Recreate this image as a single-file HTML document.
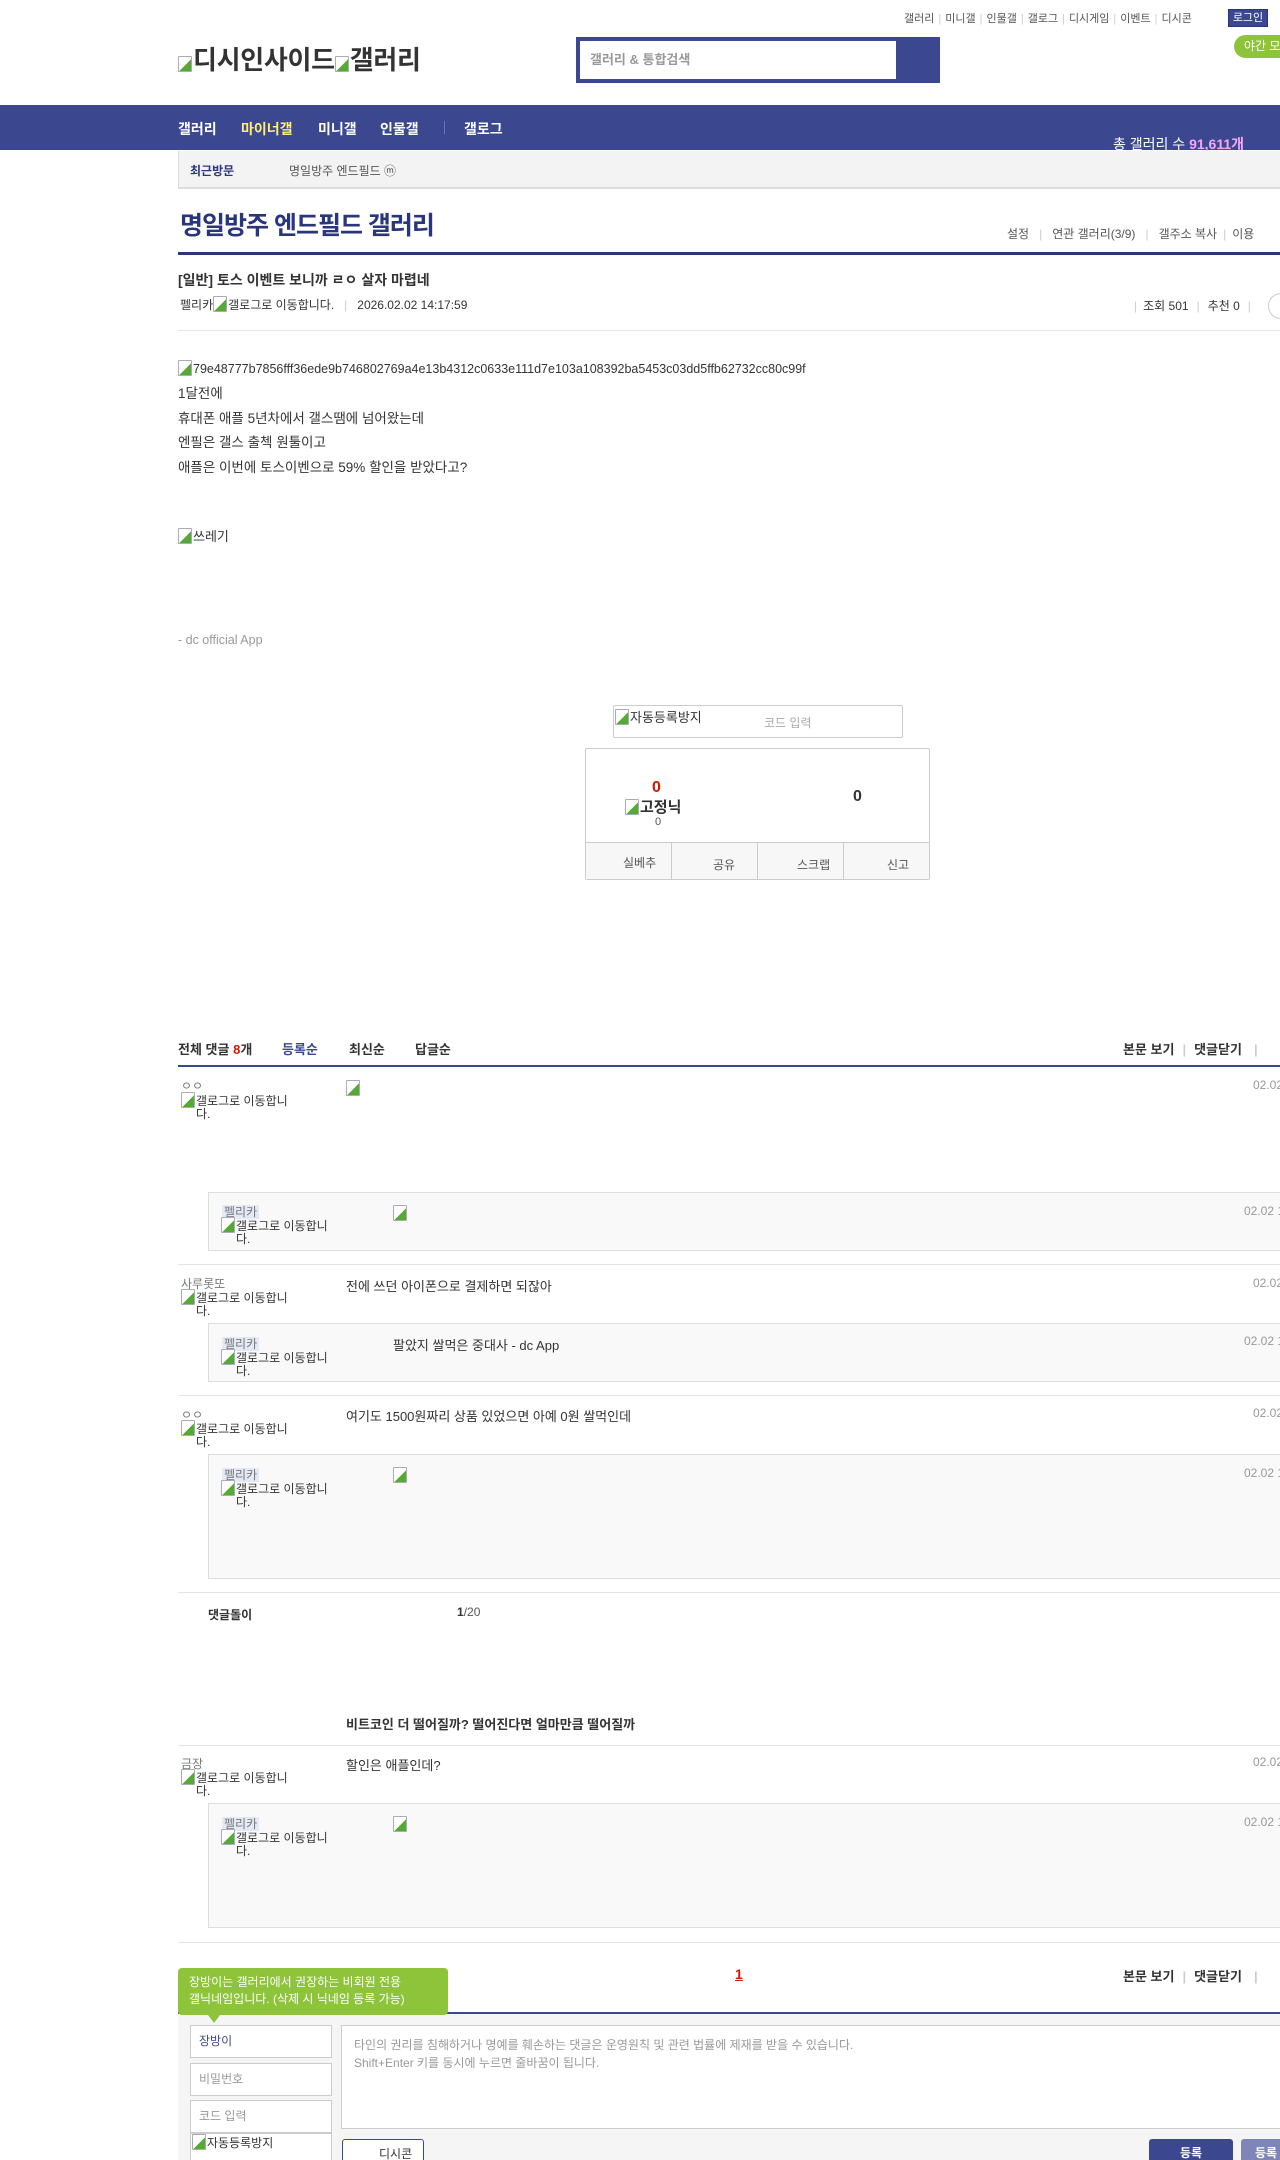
<!DOCTYPE html>
<html><head><meta charset="utf-8">
<style>
*{margin:0;padding:0;box-sizing:border-box}
html,body{width:1280px;height:2160px;overflow:hidden;background:#fff}
body{position:relative;font-family:"Liberation Sans","Noto Sans CJK KR",sans-serif;font-size:13px;color:#333}
.a{position:absolute;white-space:nowrap}
.bi{display:inline-block;width:14px;height:16px;border:1px solid #aab;border-radius:1px;background:linear-gradient(135deg,#fff 55%,#5a3 56%);vertical-align:-3px;margin-right:1px}
.nav{color:#fff;font-weight:bold;font-size:14px}
.sep{color:#ccc;margin:0 6px}
.hl{left:178px;width:1102px;height:1px;background:#e5e5e5}
.rbox{left:208px;width:1072px;background:#f9f9f9;border:1px solid #ddd;border-right:none}
.nick{font-size:12px;color:#777}
.a.gl{font-size:12px;color:#333;line-height:13px;white-space:normal;word-break:break-all;width:112px;padding-left:15px;text-indent:-15px}
.pk{background:#e4e9f7;padding:0 2px}
.dt{font-size:12px;color:#999}
</style></head><body>

<div class="a" style="left:904px;top:10px;font-size:11px;color:#555">갤러리<span class="sep" style="margin:0 4px">|</span>미니갤<span class="sep" style="margin:0 4px">|</span>인물갤<span class="sep" style="margin:0 4px">|</span>갤로그<span class="sep" style="margin:0 4px">|</span>디시게임<span class="sep" style="margin:0 4px">|</span>이벤트<span class="sep" style="margin:0 4px">|</span>디시콘</div>
<div class="a" style="left:1228px;top:9px;width:40px;height:18px;background:#3b4890;border:1px solid #29367c;color:#fff;font-size:11px;text-align:center;line-height:16px">로그인</div>
<div class="a" style="left:1234px;top:35px;width:60px;height:23px;background:#8ec43a;border-radius:12px;color:#fff;font-size:12px;line-height:23px;padding-left:10px">야간 모드</div>

<div class="a" style="left:178px;top:40px;font-size:26px;font-weight:bold;color:#333;letter-spacing:-0.3px"><span class="bi"></span>디시인사이드<span class="bi"></span>갤러리</div>

<div class="a" style="left:576px;top:37px;width:364px;height:46px;background:#3b4890"></div>
<div class="a" style="left:580px;top:41px;width:316px;height:38px;background:#fff;color:#999;font-size:13px;font-weight:bold;line-height:38px;padding-left:10px">갤러리 &amp; 통합검색</div>

<div class="a" style="left:0;top:105px;width:1280px;height:45px;background:#3b4890"></div>
<div class="a nav" style="left:178px;top:119px">갤러리</div>
<div class="a nav" style="left:241px;top:119px;color:#ffef6b">마이너갤</div>
<div class="a nav" style="left:318px;top:119px">미니갤</div>
<div class="a nav" style="left:380px;top:119px">인물갤</div>
<div class="a" style="left:444px;top:121px;width:1px;height:13px;background:#6a75b0"></div>
<div class="a nav" style="left:464px;top:119px">갤로그</div>
<div class="a" style="left:1113px;top:134px;color:#fff;font-size:14px">총 갤러리 수 <b style="color:#f7a8f5">91,611개</b></div>

<div class="a" style="left:178px;top:151px;width:1102px;height:38px;background:#f3f3f3;border-bottom:2px solid #ddd;border-left:1px solid #ddd"></div>
<div class="a" style="left:190px;top:162px;font-size:12px;font-weight:bold;color:#29367c">최근방문</div>
<div class="a" style="left:289px;top:162px;font-size:12px;color:#555">명일방주 엔드필드 ⓜ</div>

<div class="a" style="left:180px;top:206px;font-size:25px;font-weight:bold;color:#29367c;letter-spacing:-1px">명일방주 엔드필드 갤러리</div>
<div class="a" style="left:1007px;top:225px;font-size:12px;color:#555">설정<span class="sep" style="margin:0 10px">|</span>연관 갤러리(3/9)<span class="sep" style="margin:0 10px">|</span>갤주소 복사<span class="sep">|</span>이용</div>
<div class="a" style="left:178px;top:252px;width:1102px;height:3px;background:#29367c"></div>

<div class="a" style="left:178px;top:270px;font-size:14px;font-weight:bold;color:#333">[일반] 토스 이벤트 보니까 ㄹㅇ 살자 마렵네</div>
<div class="a" style="left:180px;top:296px;font-size:12px;color:#333">펠리카<span class="bi"></span>갤로그로 이동합니다.<span class="sep" style="margin:0 10px">|</span>2026.02.02 14:17:59</div>
<div class="a" style="left:1128px;top:297px;font-size:12px;color:#333"><span class="sep">|</span>조회 501<span class="sep" style="margin:0 8px">|</span>추천 0<span class="sep" style="margin:0 8px">|</span></div>
<div class="a" style="left:1268px;top:293px;width:26px;height:26px;border:1px solid #ccc;border-radius:13px"></div>
<div class="a hl" style="top:330px"></div>

<div class="a" style="left:178px;top:360px;font-size:12.5px"><span class="bi"></span>79e48777b7856fff36ede9b746802769a4e13b4312c0633e111d7e103a108392ba5453c03dd5ffb62732cc80c99f</div>
<div class="a" style="left:178px;top:382px;font-size:13.5px;line-height:24.5px">1달전에<br>휴대폰 애플 5년차에서 갤스땜에 넘어왔는데<br>엔필은 갤스 출첵 원툴이고<br>애플은 이번에 토스이벤으로 59% 할인을 받았다고?</div>
<div class="a" style="left:178px;top:526px"><span class="bi"></span>쓰레기</div>
<div class="a" style="left:178px;top:633px;color:#999;font-size:12.5px">- dc official App</div>

<div class="a" style="left:613px;top:705px;width:290px;height:33px;border:1px solid #ccc;border-radius:2px"></div>
<div class="a" style="left:615px;top:707px;font-size:13px"><span class="bi"></span>자동등록방지</div>
<div class="a" style="left:764px;top:714px;font-size:12px;color:#aaa">코드 입력</div>

<div class="a" style="left:585px;top:748px;width:345px;height:132px;border:1px solid #ccc;border-radius:2px"></div>
<div class="a" style="left:652px;top:779px;font-size:16px;font-weight:bold;color:#d31900">0</div>
<div class="a" style="left:625px;top:796px;font-size:15px;font-weight:bold"><span class="bi"></span>고정닉</div>
<div class="a" style="left:655px;top:816px;font-size:11px;color:#555">0</div>
<div class="a" style="left:853px;top:788px;font-size:16px;font-weight:bold">0</div>
<div class="a" style="left:586px;top:842px;width:343px;height:37px;background:#f7f7f7;border-top:1px solid #ccc"></div>
<div class="a" style="left:671px;top:843px;width:1px;height:36px;background:#ccc"></div>
<div class="a" style="left:757px;top:843px;width:1px;height:36px;background:#ccc"></div>
<div class="a" style="left:843px;top:843px;width:1px;height:36px;background:#ccc"></div>
<div class="a" style="left:623px;top:854px;font-size:12px;color:#555">실베추</div>
<div class="a" style="left:713px;top:856px;font-size:12px;color:#555">공유</div>
<div class="a" style="left:797px;top:856px;font-size:12px;color:#555">스크랩</div>
<div class="a" style="left:887px;top:856px;font-size:12px;color:#555">신고</div>

<div class="a" style="left:178px;top:1039px;font-size:13px;font-weight:bold">전체 댓글 <span style="color:#d31900">8</span>개</div>
<div class="a" style="left:282px;top:1039px;font-size:13px;font-weight:bold;color:#3b4890">등록순</div>
<div class="a" style="left:349px;top:1039px;font-size:13px;font-weight:bold">최신순</div>
<div class="a" style="left:415px;top:1039px;font-size:13px;font-weight:bold">답글순</div>
<div class="a" style="left:1123px;top:1039px;font-size:13px;font-weight:bold">본문 보기<span class="sep" style="margin:0 8px">|</span>댓글닫기<span class="sep" style="margin:0 12px">|</span></div>
<div class="a" style="left:178px;top:1065px;width:1102px;height:2px;background:#3b4890"></div>

<div class="a nick" style="left:181px;top:1077px">ㅇㅇ</div>
<div class="a gl" style="left:181px;top:1092px"><span class="bi"></span>갤로그로 이동합니다.</div>
<div class="a" style="left:346px;top:1080px"><span class="bi"></span></div>
<div class="a dt" style="left:1253px;top:1078px">02.02</div>
<div class="a rbox" style="top:1192px;height:59px"></div>
<div class="a nick" style="left:222px;top:1203px"><span class="pk">펠리카</span></div>
<div class="a gl" style="left:221px;top:1217px"><span class="bi"></span>갤로그로 이동합니다.</div>
<div class="a" style="left:393px;top:1205px"><span class="bi"></span></div>
<div class="a dt" style="left:1244px;top:1204px">02.02 1</div>
<div class="a hl" style="top:1264px"></div>

<div class="a nick" style="left:181px;top:1275px">사루롯또</div>
<div class="a gl" style="left:181px;top:1289px"><span class="bi"></span>갤로그로 이동합니다.</div>
<div class="a" style="left:346px;top:1276px">전에 쓰던 아이폰으로 결제하면 되잖아</div>
<div class="a dt" style="left:1253px;top:1276px">02.02</div>
<div class="a rbox" style="top:1323px;height:59px"></div>
<div class="a nick" style="left:222px;top:1335px"><span class="pk">펠리카</span></div>
<div class="a gl" style="left:221px;top:1349px"><span class="bi"></span>갤로그로 이동합니다.</div>
<div class="a" style="left:393px;top:1335px">팔았지 쌀먹은 중대사 - dc App</div>
<div class="a dt" style="left:1244px;top:1334px">02.02 1</div>
<div class="a hl" style="top:1395px"></div>

<div class="a nick" style="left:181px;top:1406px">ㅇㅇ</div>
<div class="a gl" style="left:181px;top:1420px"><span class="bi"></span>갤로그로 이동합니다.</div>
<div class="a" style="left:346px;top:1406px">여기도 1500원짜리 상품 있었으면 아예 0원 쌀먹인데</div>
<div class="a dt" style="left:1253px;top:1406px">02.02</div>
<div class="a rbox" style="top:1454px;height:125px"></div>
<div class="a nick" style="left:222px;top:1466px"><span class="pk">펠리카</span></div>
<div class="a gl" style="left:221px;top:1480px"><span class="bi"></span>갤로그로 이동합니다.</div>
<div class="a" style="left:393px;top:1467px"><span class="bi"></span></div>
<div class="a dt" style="left:1244px;top:1466px">02.02 1</div>
<div class="a hl" style="top:1592px"></div>

<div class="a" style="left:208px;top:1606px;font-size:12px;font-weight:bold">댓글돌이</div>
<div class="a" style="left:457px;top:1605px;font-size:12px;color:#555"><b style="color:#333">1</b>/20</div>
<div class="a" style="left:346px;top:1714px;font-size:13px;font-weight:bold">비트코인 더 떨어질까? 떨어진다면 얼마만큼 떨어질까</div>
<div class="a hl" style="top:1745px"></div>

<div class="a nick" style="left:181px;top:1755px">금장</div>
<div class="a gl" style="left:181px;top:1769px"><span class="bi"></span>갤로그로 이동합니다.</div>
<div class="a" style="left:346px;top:1755px">할인은 애플인데?</div>
<div class="a dt" style="left:1253px;top:1755px">02.02</div>
<div class="a rbox" style="top:1803px;height:125px"></div>
<div class="a nick" style="left:222px;top:1815px"><span class="pk">펠리카</span></div>
<div class="a gl" style="left:221px;top:1829px"><span class="bi"></span>갤로그로 이동합니다.</div>
<div class="a" style="left:393px;top:1816px"><span class="bi"></span></div>
<div class="a dt" style="left:1244px;top:1815px">02.02 1</div>
<div class="a hl" style="top:1942px"></div>

<div class="a" style="left:735px;top:1966px;font-size:14px;font-weight:bold;color:#d31900;text-decoration:underline">1</div>
<div class="a" style="left:1123px;top:1966px;font-size:13px;font-weight:bold">본문 보기<span class="sep" style="margin:0 8px">|</span>댓글닫기<span class="sep" style="margin:0 12px">|</span></div>
<div class="a" style="left:178px;top:2012px;width:1102px;height:2px;background:#3b4890"></div>

<div class="a" style="left:178px;top:2014px;width:1102px;height:146px;background:#f5f5f5"></div>
<div class="a" style="left:178px;top:1968px;width:270px;height:47px;background:#8ec43a;border-radius:4px;color:#fff;font-size:12px;line-height:17px;padding:6px 0 0 11px">장방이는 갤러리에서 권장하는 비회원 전용<br>갤닉네임입니다. (삭제 시 닉네임 등록 가능)</div>
<div class="a" style="left:208px;top:2015px;width:0;height:0;border-left:6px solid transparent;border-right:6px solid transparent;border-top:8px solid #8ec43a"></div>
<div class="a" style="left:190px;top:2025px;width:142px;height:33px;background:#fff;border:1px solid #ccc;font-size:12px;color:#3b4890;line-height:31px;padding-left:8px">장방이</div>
<div class="a" style="left:190px;top:2063px;width:142px;height:33px;background:#fff;border:1px solid #ccc;font-size:12px;color:#999;line-height:31px;padding-left:8px">비밀번호</div>
<div class="a" style="left:190px;top:2100px;width:142px;height:33px;background:#fff;border:1px solid #ccc;font-size:12px;color:#999;line-height:31px;padding-left:8px">코드 입력</div>
<div class="a" style="left:190px;top:2133px;width:142px;height:30px;background:#fff;border:1px solid #ccc;font-size:12px;padding-left:1px"><span class="bi"></span>자동등록방지</div>
<div class="a" style="left:341px;top:2025px;width:950px;height:104px;background:#fff;border:1px solid #ccc;font-size:12px;color:#999;line-height:18px;padding:10px 12px;white-space:normal">타인의 권리를 침해하거나 명예를 훼손하는 댓글은 운영원칙 및 관련 법률에 제재를 받을 수 있습니다.<br>Shift+Enter 키를 동시에 누르면 줄바꿈이 됩니다.</div>
<div class="a" style="left:342px;top:2139px;width:82px;height:30px;background:#fff;border:1px solid #3b4890;border-radius:3px;font-size:12px;line-height:28px;padding-left:36px">디시콘</div>
<div class="a" style="left:1149px;top:2139px;width:84px;height:30px;background:#3b4890;border-radius:3px;color:#fff;font-size:12px;font-weight:bold;text-align:center;line-height:28px">등록</div>
<div class="a" style="left:1241px;top:2139px;width:84px;height:30px;background:#7d86b7;border-radius:3px;color:#fff;font-size:12px;font-weight:bold;line-height:28px;padding-left:14px">등록</div>

</body></html>
